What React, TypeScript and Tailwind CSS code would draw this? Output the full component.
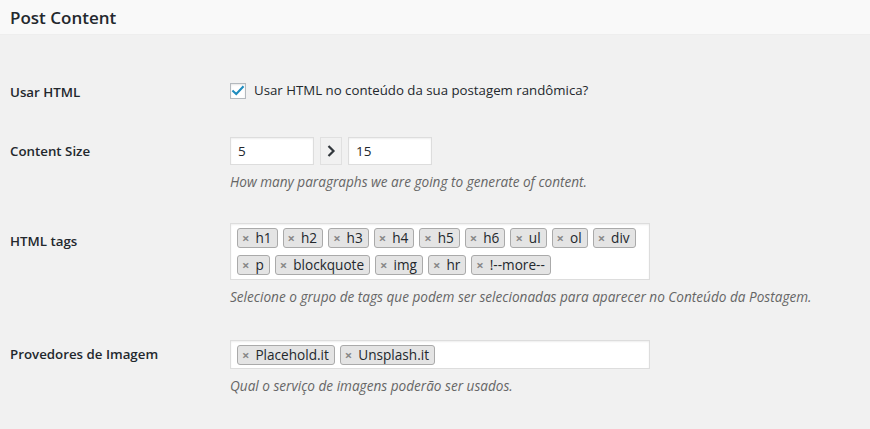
import React from "react";

const font = { fontFamily: '"Open Sans", "Noto Sans", sans-serif' };

const htmlTags = ["h1", "h2", "h3", "h4", "h5", "h6", "ul", "ol", "div", "p", "blockquote", "img", "hr", "!--more--"];
const providers = ["Placehold.it", "Unsplash.it"];

function Tag({ label }: { label: string }) {
  return (
    <li className="flex h-[20px] items-center gap-[6px] rounded-[3px] border border-[#aaa] bg-[#e4e4e4] pl-[4px] pr-[5px] text-[13.6px] leading-none text-[#23282d]">
      <span className="text-[13px] font-bold leading-none text-[#888]">×</span>
      <span>{label}</span>
    </li>
  );
}

function Row({ label, children, labelClass = "", rowClass = "py-[15px]" }: { label: string; children: React.ReactNode; labelClass?: string; rowClass?: string }) {
  return (
    <div className={`flex ${rowClass}`}>
      <div className={`w-[220px] shrink-0 pl-[10px] text-[13.3px] font-semibold text-[#23282d] ${labelClass}`}>{label}</div>
      <div className="flex-1 pl-[10px]">{children}</div>
    </div>
  );
}

function Desc({ children }: { children: React.ReactNode }) {
  return <p className="mt-[8px] text-[13.6px] italic leading-[18px] text-[#666]">{children}</p>;
}

export default function App() {
  return (
    <div className="h-[429px] w-[870px] bg-[#f1f1f1] text-[#23282d]" style={font}>
      <div className="flex h-[35px] items-center border-b border-[#eee] bg-[#f9f9f9] px-[10px] pt-[1px]">
        <h2 className="text-[17px] font-semibold">Post Content</h2>
      </div>

      <div className="pt-[25px]">
        <Row label="Usar HTML" labelClass="pt-[8px]">
          <label className="flex h-[32px] items-center gap-[8px] text-[13.25px]">
            <span className="flex h-[16px] w-[16px] items-center justify-center border border-[#b4b9be] bg-white shadow-[inset_0_1px_2px_rgba(0,0,0,0.1)]">
              <svg viewBox="0 0 16 16" className="h-[14px] w-[14px]">
                <path d="M2.5 8.2 L6 11.5 L13.5 3.5" fill="none" stroke="#1e8cbe" strokeWidth="2.4" strokeLinecap="square" />
              </svg>
            </span>
            Usar HTML no conteúdo da sua postagem randômica?
          </label>
        </Row>

        <Row label="Content Size" labelClass="pt-[5px]" rowClass="pt-[15px] pb-[16px]">
          <div className="flex items-center gap-[6px]">
            <div className="flex h-[28px] w-[84px] items-center border border-[#ddd] bg-white px-[7px] text-[13.5px] shadow-[inset_0_1px_2px_rgba(0,0,0,0.07)]">5</div>
            <div className="flex h-[28px] w-[22px] items-center justify-center border border-[#e0e0e0] bg-[#f1f1f1]">
              <svg viewBox="0 0 10 14" className="h-[14px] w-[10px]">
                <path d="M2.5 2 L7.5 7 L2.5 12" fill="none" stroke="#32373c" strokeWidth="2.2" />
              </svg>
            </div>
            <div className="flex h-[28px] w-[84px] items-center border border-[#ddd] bg-white px-[7px] text-[13.5px] shadow-[inset_0_1px_2px_rgba(0,0,0,0.07)]">15</div>
          </div>
          <Desc>How many paragraphs we are going to generate of content.</Desc>
        </Row>

        <Row label="HTML tags" labelClass="pt-[9px]" rowClass="pt-[16px] pb-[19px]">
          <ul className="flex w-[420px] flex-wrap gap-x-[5px] gap-y-[7px] border border-[#ddd] bg-white px-[6px] pt-[4px] pb-[4px] shadow-[inset_0_1px_2px_rgba(0,0,0,0.07)]">
            {htmlTags.map((t) => (
              <Tag key={t} label={t} />
            ))}
          </ul>
          <Desc>Selecione o grupo de tags que podem ser selecionadas para aparecer no Conteúdo da Postagem.</Desc>
        </Row>

        <Row label="Provedores de Imagem" labelClass="pt-[5px]">
          <ul className="flex h-[29px] w-[420px] flex-wrap gap-x-[5px] border border-[#ddd] bg-white px-[6px] pt-[4px] shadow-[inset_0_1px_2px_rgba(0,0,0,0.07)]">
            {providers.map((t) => (
              <Tag key={t} label={t} />
            ))}
          </ul>
          <Desc>Qual o serviço de imagens poderão ser usados.</Desc>
        </Row>
      </div>
    </div>
  );
}
